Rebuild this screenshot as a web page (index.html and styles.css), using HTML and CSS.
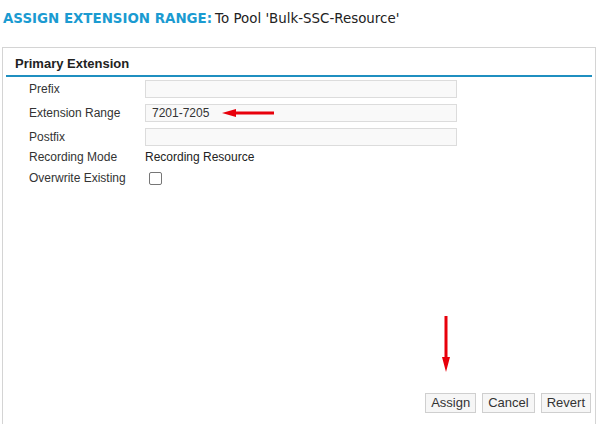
FILE: index.html
```html
<!DOCTYPE html>
<html>
<head>
<meta charset="utf-8">
<link rel="stylesheet" href="styles.css">
</head>
<body>
<div class="title"><span class="title-main">ASSIGN EXTENSION RANGE:</span><span class="title-sub">To Pool 'Bulk-SSC-Resource'</span></div>
<div class="panel">
  <div class="panel-head">Primary Extension</div>
  <div class="form">
    <div class="row"><div class="label">Prefix</div><div class="field"><div class="input"></div></div></div>
    <div class="row"><div class="label">Extension Range</div><div class="field"><div class="input">7201-7205</div>
      <svg class="arrow-left" width="54" height="8" viewBox="0 0 54 8"><polygon points="0,4 14,0 14,2.5 52,2.5 52,5.5 14,5.5 14,8" fill="#e8000b"/></svg></div></div>
    <div class="row"><div class="label">Postfix</div><div class="field"><div class="input"></div></div></div>
    <div class="row mode-row"><div class="label">Recording Mode</div><div class="value">Recording Resource</div></div>
    <div class="row check-row"><div class="label">Overwrite Existing</div><div class="value"><span class="checkbox"></span></div></div>
  </div>
  <div class="buttons">
    <svg class="arrow-down" width="8" height="56" viewBox="0 0 8 56"><polygon points="2.5,0 5.5,0 5.5,41 8,41 4,56 0,41 2.5,41" fill="#e8000b"/></svg>
    <span class="btn">Assign</span><span class="btn">Cancel</span><span class="btn">Revert</span>
  </div>
</div>
</body>
</html>
```
FILE: styles.css
```css
html, body { margin: 0; padding: 0; background: #fff; }
body { font-family: "Liberation Sans", Arial, sans-serif; font-size: 12px; color: #333; width: 597px; height: 424px; overflow: hidden; }
.title { padding: 11px 0 0 3px; height: 36px; box-sizing: border-box; font-family: "DejaVu Sans", Verdana, sans-serif; font-size: 13.4px; line-height: 15px; white-space: nowrap; }
.title-main { color: #1b9bd1; font-weight: bold; margin-right: 3px; }
.title-sub { color: #222; }
.panel { margin-left: 2px; width: 594px; height: 400px; border: 1px solid #d4d4d4; box-sizing: border-box; margin-top: 11px; display: flex; flex-direction: column; }
.panel-head { margin: 0 3px 0 3px; padding: 8px 0 3px 9px; font-weight: bold; font-size: 13px; color: #222; line-height: 16px; border-bottom: 2px solid #1f8fc0; }
.form { padding: 0 0 0 26px; }
.row { display: flex; align-items: center; height: 24px; }
.label { width: 116px; flex: none; }
.field { position: relative; }
.input { width: 312px; height: 18px; box-sizing: border-box; border: 1px solid #dcdcdc; background: #f9f9f9; padding: 0 6px; line-height: 16px; color: #333; }
.mode-row { height: 16px; }
.check-row { height: 26px; }
.value { color: #222; display: flex; align-items: center; }
.checkbox { display: inline-block; width: 11px; height: 11px; border: 1px solid #767676; border-radius: 2px; margin-left: 4px; }
.arrow-left { position: absolute; left: 77px; top: 5px; }
.buttons { margin-top: auto; margin-bottom: 33px; display: flex; justify-content: flex-end; gap: 6px; padding-right: 4px; position: relative; }
.arrow-down { position: absolute; left: 439px; top: -77px; }
.btn { display: inline-block; height: 20px; box-sizing: border-box; border: 1px solid #cfcfcf; background: #f6f6f6; padding: 0 5px; line-height: 18px; font-size: 13px; color: #333; }
```
